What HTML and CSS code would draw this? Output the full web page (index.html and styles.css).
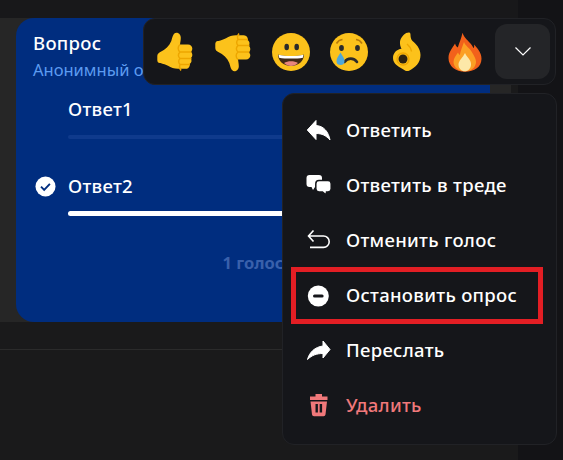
FILE: index.html
```html
<!DOCTYPE html>
<html lang="ru">
<head>
  <meta charset="UTF-8">
  <meta name="viewport" content="width=device-width, initial-scale=1.0" />
  <title>Опрос</title>
  <link rel="stylesheet" href="styles.css">
</head>
<body>
  <div class="app">
    <main class="chat">
      <div class="chat-top"></div>
      <div class="msg-row">
        <div class="poll">
          <div class="poll-title">Вопрос</div>
          <div class="poll-sub">Анонимный опрос</div>
          <div class="answer">
            <div class="answer-name">Ответ1</div>
            <div class="track"><div class="fill" style="width: 0%"></div></div>
          </div>
          <div class="answer answer-voted">
            <svg class="check" viewBox="0 0 22 22"><circle cx="11" cy="11" r="10.5" fill="#fff"/><path d="M6.3 11.2l3.3 3.3 6-6.2" fill="none" stroke="#002d7f" stroke-width="2"/></svg>
            <div class="answer-name">Ответ2</div>
            <div class="track"><div class="fill" style="width: 100%"></div></div>
          </div>
          <div class="poll-votes">1 голос</div>
        </div>
      </div>
      <div class="chat-gap"></div>
    </main>
    <aside class="side"></aside>
  </div>

  <div class="reactions">
    <div class="emoji">
      <svg viewBox="0 0 40 40"><path d="M21.500.8c2.500 0 4.300 2.200 4.300 5 0 2.500-.5 4.500-.8 6.700h8c2.500 0 4.300 1.800 4.300 4 0 1.500-.6 2.500-1.500 3.300 1 .8 1.500 1.800 1.500 3.200 0 1.500-.7 2.500-1.700 3.200.7.8 1 1.700.9 2.700-.1 1.400-1 2.400-2 3 .3.8.3 1.600 0 2.300-.5 1.600-2 2.600-4 2.600H23c-4 0-7-1-10-3-2-1-5-2-7.500-2.800C3.500 31.500 2.300 30 2.300 28v-4c0-2 1.200-3 3-4 5-2.500 9-6 11-11 1-3 1.700-8.200 5.200-8.200z" fill="#fcc21b"/><path d="M25 20h11.500M25 26.500h11.500M25 32.500h10M25 12.500c-2.500 2-2.500 5.500 0 7.500-2 2-2 4.500 0 6.500-1.800 2-1.800 4 0 6-1 2-.5 4 1 6" fill="none" stroke="#eda600" stroke-width="1.400"/></svg>
    </div>
    <div class="emoji">
      <svg viewBox="0 0 40 40"><g transform="matrix(1 0 0 -1 0 40)"><path d="M21.500.8c2.500 0 4.300 2.200 4.300 5 0 2.500-.5 4.500-.8 6.700h8c2.500 0 4.300 1.800 4.300 4 0 1.500-.6 2.500-1.500 3.300 1 .8 1.500 1.800 1.500 3.200 0 1.500-.7 2.500-1.700 3.200.7.8 1 1.700.9 2.700-.1 1.400-1 2.400-2 3 .3.8.3 1.600 0 2.300-.5 1.600-2 2.600-4 2.600H23c-4 0-7-1-10-3-2-1-5-2-7.500-2.800C3.500 31.500 2.300 30 2.300 28v-4c0-2 1.200-3 3-4 5-2.500 9-6 11-11 1-3 1.700-8.200 5.200-8.200z" fill="#fcc21b"/><path d="M25 20h11.500M25 26.500h11.500M25 32.500h10M25 12.500c-2.500 2-2.500 5.500 0 7.500-2 2-2 4.500 0 6.500-1.800 2-1.800 4 0 6-1 2-.5 4 1 6" fill="none" stroke="#eda600" stroke-width="1.400"/></g></svg>
    </div>
    <div class="emoji">
      <svg viewBox="0 0 40 40"><circle cx="20" cy="20" r="19" fill="#fcc21b"/><ellipse cx="15.700" cy="15" rx="2.300" ry="3.300" fill="#2b2b2b"/><ellipse cx="25.700" cy="15" rx="2.300" ry="3.300" fill="#2b2b2b"/><path d="M7 22.500c6 2.200 20 2.200 26 0C33 29 27.500 34 20 34S7 29 7 22.500z" fill="#402a16"/><path d="M7.500 22.700c6 1.800 19 1.800 25 0l-.6 3c-6.500 1.200-17.300 1.200-23.800 0z" fill="#fff"/><path d="M13 31c3.500-2.500 10.500-2.500 14 0-2 1.900-4.500 3-7 3s-5-1.100-7-3z" fill="#e8867c"/></svg>
    </div>
    <div class="emoji">
      <svg viewBox="0 0 40 40"><circle cx="20" cy="20" r="19" fill="#fcc21b"/><ellipse cx="12.500" cy="16" rx="2.400" ry="3" fill="#2b2b2b"/><ellipse cx="28.500" cy="16" rx="2.400" ry="3" fill="#2b2b2b"/><path d="M7.500 11.500c1.300-2.300 3.500-3.700 6-4M33 11.500c-1.300-2.300-3.500-3.700-6-4" fill="none" stroke="#b87a0a" stroke-width="1.600"/><path d="M15.500 30c3-4.500 9.500-4.500 12.500 0" fill="none" stroke="#2b2b2b" stroke-width="2.600" stroke-linecap="round"/><path d="M11.500 20.500c2 3.500 4 5.500 4 8.500a4 4 0 0 1-8 0c0-3 2-5 4-8.500z" fill="#4fa7d8"/></svg>
    </div>
    <div class="emoji">
      <svg viewBox="0 0 40 40"><path d="M20 .8c-3 1-6.500 5-7 9-.3 2.500.5 5 1.500 7-4.500.5-8.500 4-8.500 9.200 0 3 1.500 5.500 3.500 7 3 2.500 6 3.500 8.500 5.500 1.200.8 3 .8 4.500 0 6-3 11-8 11-15.500 0-7-5-11.500-8-14-1.500-1.500-2-4-2-6 0-1 0-3-2.500-2.200z" fill="#fcc21b"/><circle cx="16" cy="27" r="4.500" fill="#2a2110"/><circle cx="16" cy="27" r="6" fill="none" stroke="#eda600" stroke-width="1.400"/><path d="M20 12c2.500 2 4 4.500 4.500 7.500" fill="none" stroke="#eda600" stroke-width="1.300"/></svg>
    </div>
    <div class="emoji">
      <svg viewBox="0 0 40 40"><path d="M17.500.8c1.500 5 6 8 9 12 1 1.400 1.700 2.500 2.200 3.500.6-1.400.6-2.600.3-3.700 3 3.500 7.500 7.500 7.500 14.200 0 8-7 13-16.500 13S3.500 34 3.500 26c0-6 4-10 6.500-14.500.6 2 1.500 3 2.800 4C14.300 10.500 16.500 6 17.500.8z" fill="#f2611b"/><path d="M19 10c1.500 4 5.500 6 7.500 9.500 3 5 4.500 7.500 4.500 10.500 0 5-4.500 9.300-11 9.300S8.500 35 8.500 30c0-4 2.500-6.500 4.500-9.500.5 1.300 1 2 1.800 2.500.8-4.500 2.700-8.500 4.200-13z" fill="#fca024"/><path d="M20 21c1 3 3.500 4.500 5 7.500 1 2 1 3 1 4 0 3.800-2.800 6.800-6.200 6.800s-6.300-3-6.300-6.800c0-4 4.500-7 6.500-11.500z" fill="#fde8a8"/></svg>
    </div>
    <button class="more">
      <svg viewBox="0 0 16 9" width="16" height="9"><path d="M.5.5L8 8l7.500-7.500" fill="none" stroke="#fff" stroke-width="1.200"/></svg>
    </button>
  </div>

  <div class="menu">
    <div class="menu-item">
      <svg class="ico" viewBox="0 0 24 24"><path d="M1.300 11L10 1.500v5C18 7 22.500 13 24 21c-4-4.500-8-6.500-14-6.500v6z" fill="#fff" stroke="#fff" stroke-linejoin="round"/></svg>
      <span>Ответить</span>
    </div>
    <div class="menu-item">
      <svg class="ico" viewBox="0 0 24 24"><path d="M3.500 1h9.500a3 3 0 0 1 3 3v6a3 3 0 0 1-3 3H9l-2 3-1.500-3H3.500a3 3 0 0 1-3-3V4a3 3 0 0 1 3-3z" fill="#fff"/><path d="M13 6.500h9a3.200 3.200 0 0 1 3.200 3.200v5.100a3.200 3.200 0 0 1-3.200 3.200h-1.500l-.3 3-3.700-3H13a3.200 3.200 0 0 1-3.200-3.200V9.700A3.200 3.200 0 0 1 13 6.500z" fill="#fff" stroke="#15161a" stroke-width="1.500"/></svg>
      <span>Ответить в треде</span>
    </div>
    <div class="menu-item">
      <svg class="ico" viewBox="0 0 24 24"><path d="M7.500 1.500l-5 5.500 5 5.500M2.500 7h15a5.700 5.700 0 0 1 0 11.400H4" fill="none" stroke="#fff" stroke-width="1.600"/></svg>
      <span>Отменить голос</span>
    </div>
    <div class="menu-item">
      <svg class="ico" viewBox="0 0 24 24"><circle cx="12.300" cy="12" r="10.500" fill="#fff"/><rect x="7" y="10.500" width="10.600" height="3" rx="1.500" fill="#15161a"/></svg>
      <span>Остановить опрос</span>
      <div class="mark"></div>
    </div>
    <div class="menu-item">
      <svg class="ico" viewBox="0 0 24 24"><path d="M24 10.500L17 2v5C9 8 3.500 13 1.500 20.500c4.500-4.500 9.500-6 15.500-6V19z" fill="#fff" stroke="#fff" stroke-linejoin="round"/></svg>
      <span>Переслать</span>
    </div>
    <div class="menu-item menu-item-danger">
      <svg class="ico" viewBox="0 0 24 24"><path d="M9.500 0h6.500v2.500h5.500v3.500H4V2.500h5.500zM4.500 7.500h16.500l-1.500 13a2 2 0 0 1-2 1.800H8a2 2 0 0 1-2-1.800z" fill="#f0787a"/><rect x="9.500" y="10" width="2.400" height="8.500" fill="#15161a"/><rect x="13.700" y="10" width="2.400" height="8.500" fill="#15161a"/></svg>
      <span>Удалить</span>
    </div>
  </div>
</body>
</html>
```

FILE: styles.css
```css
* {
  box-sizing: border-box;
}

html, body {
  height: 100%;
}

body {
  margin: 0;
  overflow: hidden;
  background: #1a1a1b;
  color: #fff;
  font-family: "Noto Sans", Inter, sans-serif;
}

.app {
  display: flex;
  height: 100%;
}

.chat {
  width: 518px;
}

.side {
  flex: 1;
  background: #131316;
}

.chat-top {
  height: 18px;
  background: #18181a;
}

.msg-row {
  width: 511px;
  padding-left: 16px;
  background: #262626;
}

.chat-gap {
  height: 28px;
  border-bottom: 1px solid #2b2b2b;
}

.poll {
  position: relative;
  width: 474px;
  height: 304px;
  padding: 14px 17px 0;
  background: #002d7f;
  border-radius: 18px;
  overflow: hidden;
}

.poll-title {
  font-size: 18.500px;
  font-weight: 500;
  letter-spacing: .3px;
  line-height: 21px;
}

.poll-sub {
  margin-top: 7px;
  font-size: 16.500px;
  line-height: 20px;
  color: #5d9bf0;
}

.answer {
  position: relative;
  margin: 18px 0 0 35px;
  height: 60px;
}

.answer-voted {
  margin-top: 17px;
}

.answer-name {
  font-size: 18.500px;
  font-weight: 500;
  letter-spacing: .3px;
  line-height: 21px;
}

.check {
  position: absolute;
  left: -33px;
  top: 1px;
  width: 21px;
  height: 21px;
}

.track {
  height: 4px;
  margin-top: 16px;
  border-radius: 2px;
  background: #0f3a8c;
}

.answer-voted .track {
  height: 5px;
  margin-top: 15px;
}

.fill {
  height: 100%;
  border-radius: 3px;
  background: #fff;
}

.poll-votes {
  margin-top: 16px;
  text-align: center;
  font-size: 16.500px;
  font-weight: 700;
  color: #3960ab;
}

.reactions {
  position: absolute;
  left: 143px;
  top: 18px;
  display: flex;
  align-items: center;
  height: 67px;
  padding: 5px 5px 5px 2px;
  background: #15161a;
  border: 1px solid #212226;
  border-radius: 12px;
}

.emoji {
  display: flex;
  align-items: center;
  justify-content: center;
  width: 58px;
}

.emoji svg {
  width: 40px;
  height: 40px;
}

.more {
  display: flex;
  align-items: center;
  justify-content: center;
  width: 55px;
  height: 55px;
  margin-left: 1px;
  padding: 0;
  background: #242528;
  border: none;
  border-radius: 12px;
}

.menu {
  position: absolute;
  left: 282px;
  top: 93px;
  width: 275px;
  height: 352px;
  padding-top: 9px;
  background: #15161a;
  border: 1px solid #212226;
  border-radius: 12px;
}

.menu-item {
  position: relative;
  display: flex;
  align-items: center;
  height: 55px;
  padding-left: 23px;
  font-size: 18.500px;
  font-weight: 500;
  letter-spacing: .3px;
}

.menu-item span {
  padding-bottom: 2px;
}

.ico {
  width: 24px;
  height: 24px;
  margin-right: 16px;
  flex: none;
  overflow: visible;
}

.menu-item-danger {
  color: #f0787a;
}

.mark {
  position: absolute;
  left: 8px;
  top: -1px;
  width: 252px;
  height: 57px;
  border: 5px solid #e31e24;
}
```
